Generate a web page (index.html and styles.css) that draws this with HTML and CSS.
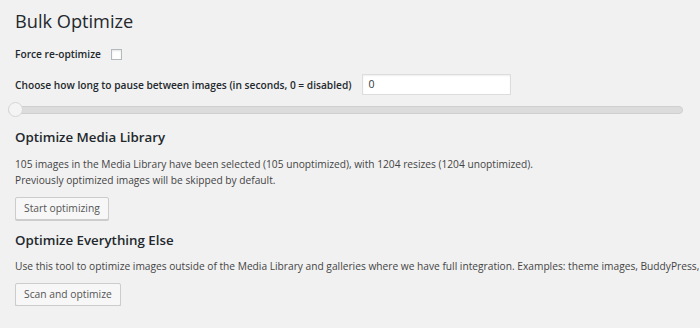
FILE: index.html
```html
<!DOCTYPE html>
<html>
<head>
<meta charset="utf-8">
<link rel="stylesheet" href="styles.css">
</head>
<body>
<div class="wrap">
  <h1 class="title">Bulk Optimize</h1>
  <div class="row force">
    <label class="lbl">Force re-optimize</label>
    <span class="checkbox"></span>
  </div>
  <div class="row delay">
    <label class="lbl delay-lbl">Choose how long to pause between images (in seconds, 0 = disabled)</label>
    <div class="input">0</div>
  </div>
  <div class="slider"><span class="handle"></span></div>
  <h2 class="section">Optimize Media Library</h2>
  <p class="text">105 images in the Media Library have been selected (105 unoptimized), with 1204 resizes (1204 unoptimized).<br>Previously optimized images will be skipped by default.</p>
  <div class="btn">Start optimizing</div>
  <h2 class="section second">Optimize Everything Else</h2>
  <p class="text second-text nowrap">Use this tool to optimize images outside of the Media Library and galleries where we have full integration. Examples: theme images, BuddyPress,</p>
  <div class="btn">Scan and optimize</div>
</div>
</body>
</html>
```
FILE: styles.css
```css
html, body {
  margin: 0;
  padding: 0;
  background: #f1f1f1;
  overflow: hidden;
}
body {
  font-family: "Open Sans", "Noto Sans", sans-serif;
  color: #444;
  font-size: 10.2px;
}
.wrap {
  padding-left: 15px;
}
.title {
  margin: 0;
  padding-top: 7px;
  font-size: 18.2px;
  font-weight: 400;
  line-height: 28px;
  color: #23282d;
}
.row {
  display: flex;
  align-items: flex-start;
}
.force {
  margin-top: 11px;
  height: 17px;
}
.lbl {
  font-weight: 600;
  font-size: 10.2px;
  line-height: 17px;
  color: #23282d;
}
.checkbox {
  width: 9px;
  height: 9px;
  margin: 3px 0 0 10px;
  border: 1px solid #b4b9be;
  background: #fefefe;
  box-shadow: inset 0 1px 2px rgba(0,0,0,0.1);
}
.delay {
  margin-top: 11px;
  height: 21px;
}
.delay-lbl {
  padding-top: 3px;
  line-height: 17px;
  margin-right: 10px;
}
.input {
  width: 141px;
  height: 19px;
  border: 1px solid #ddd;
  background: #fff;
  box-shadow: inset 0 1px 2px rgba(0,0,0,0.07);
  font-size: 10.5px;
  line-height: 19px;
  padding-left: 6px;
  color: #32373c;
}
.slider {
  position: relative;
  margin: 11px 0 0 -7px;
  width: 673px;
  height: 6px;
  background: #dcdcdc;
  border: 1px solid #d0d0d0;
  border-radius: 4px;
}
.handle {
  position: absolute;
  left: -1px;
  top: -5px;
  width: 13px;
  height: 13px;
  border-radius: 50%;
  background: #f4f4f4;
  border: 1px solid #d6d6d6;
}
.section {
  margin: 13px 0 0;
  font-size: 13.3px;
  font-weight: 600;
  line-height: 20px;
  color: #23282d;
}
.section.second {
  margin-top: 10px;
}
.text {
  margin: 9px 0 0;
  line-height: 16px;
}
.second-text {
  margin-top: 8px;
}
.nowrap {
  white-space: nowrap;
}
.btn {
  display: inline-block;
  margin-top: 9px;
  height: 21px;
  line-height: 21px;
  padding: 0 8px;
  border: 1px solid #ccc;
  border-radius: 2px;
  background: #f7f7f7;
  box-shadow: 0 1px 0 #ccc;
  color: #555;
  font-size: 10.3px;
}
```
